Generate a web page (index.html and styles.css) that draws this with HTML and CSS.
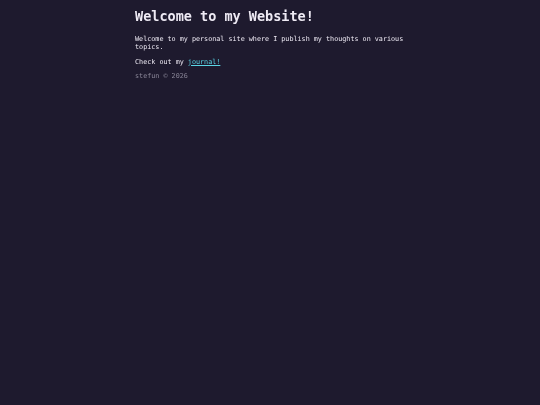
FILE: index.html
```html
<!DOCTYPE html>
<html>
<head>
<meta charset="utf-8">
<link rel="stylesheet" href="styles.css">
</head>
<body>
<main class="page">
<h1 class="title">Welcome to my Website!</h1>
<p class="text">Welcome to my personal site where I publish my thoughts on various topics.</p>
<p class="text">Check out my <a class="link" href="#">journal!</a></p>
<footer class="foot">stefun © 2026</footer>
</main>
</body>
</html>
```
FILE: styles.css
```css
html, body {
  margin: 0;
  background: #1e1a2e;
  height: 100%;
}
.page {
  width: 270px;
  margin: 0 auto;
  padding-top: 8px;
  font-family: "DejaVu Sans Mono", monospace;
  color: #eeeaf4;
  font-size: 6.75px;
  line-height: 1.2;
  -webkit-font-smoothing: antialiased;
  will-change: transform;
}
.title {
  font-size: 13.5px;
  font-weight: bold;
  margin: 0 0 11px 0;
  line-height: 1.2;
}
.text {
  margin: 0 0 6.5px 0;
}
.link {
  color: #5ad6e6;
}
.foot {
  color: #8c889a;
}
```
